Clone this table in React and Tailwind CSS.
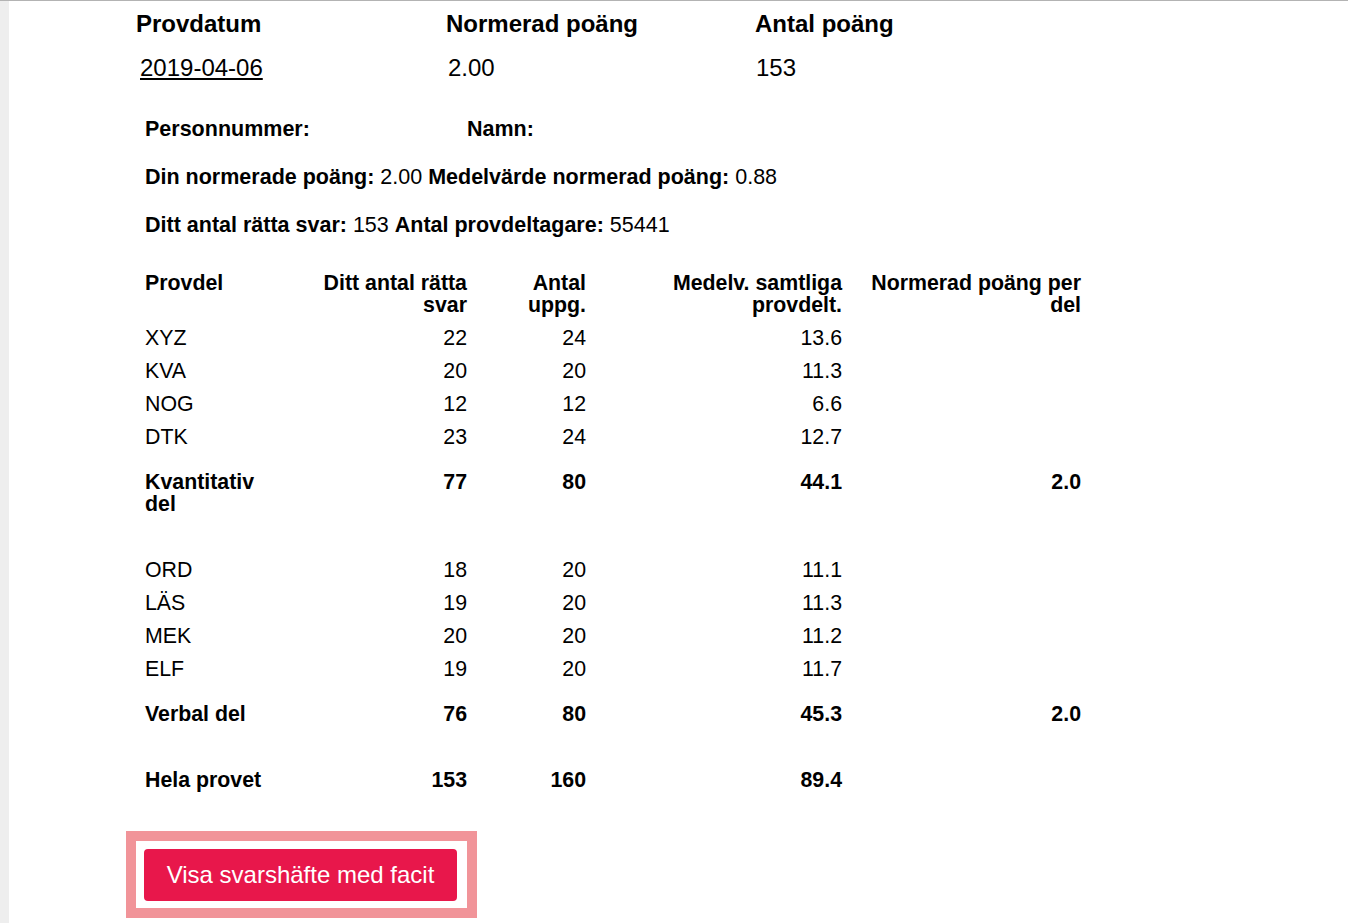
import React from "react"

const parts = [
    { name: "XYZ", right: 22, total: 24, avg: "13.6" },
    { name: "KVA", right: 20, total: 20, avg: "11.3" },
    { name: "NOG", right: 12, total: 12, avg: "6.6" },
    { name: "DTK", right: 23, total: 24, avg: "12.7" },
]

const verbal = [
    { name: "ORD", right: 18, total: 20, avg: "11.1" },
    { name: "LÄS", right: 19, total: 20, avg: "11.3" },
    { name: "MEK", right: 20, total: 20, avg: "11.2" },
    { name: "ELF", right: 19, total: 20, avg: "11.7" },
]

function PartRow({ row }) {
    return (
        <tr>
            <td className="py-[5.5px] text-left align-top">{row.name}</td>
            <td className="py-[5.5px] text-right align-top">{row.right}</td>
            <td className="py-[5.5px] text-right align-top">{row.total}</td>
            <td className="py-[5.5px] text-right align-top">{row.avg}</td>
            <td className="py-[5.5px] text-right align-top"></td>
        </tr>
    )
}

function SumRow({ label, right, total, avg, score, extraTop = true }) {
    const pad = extraTop ? "pt-[17.5px] pb-[5.5px]" : "py-[5.5px]"
    return (
        <tr className="font-bold">
            <td className={`${pad} text-left align-top`}>{label}</td>
            <td className={`${pad} text-right align-top`}>{right}</td>
            <td className={`${pad} text-right align-top`}>{total}</td>
            <td className={`${pad} text-right align-top`}>{avg}</td>
            <td className={`${pad} text-right align-top`}>{score}</td>
        </tr>
    )
}

export default function App() {
    return (
        <div className="min-h-screen flex bg-white text-black border-t border-[#b3b3b3] font-['Liberation_Sans',Arial,sans-serif]">
            {/* left strip */}
            <div className="w-[9px] shrink-0 bg-[#eeeeee]" />

            <div className="flex-1">
                {/* summary header */}
                <div className="ml-[127px] pt-[9px] grid grid-cols-[310px_309px_310px] text-[24px] leading-[28px]">
                    <div className="font-bold">Provdatum</div>
                    <div className="font-bold">Normerad poäng</div>
                    <div className="font-bold">Antal poäng</div>
                    <div className="pt-[16px] pl-[4px]">
                        <a href="#" className="underline">2019-04-06</a>
                    </div>
                    <div className="pt-[16px] pl-[2px]">2.00</div>
                    <div className="pt-[16px] pl-[1px]">153</div>
                </div>

                {/* person info */}
                <div className="ml-[136px] mt-[35px] flex flex-col gap-[24px] text-[21.5px] leading-[24px]">
                    <div className="flex font-bold">
                        <span className="w-[322px]">Personnummer:</span>
                        <span>Namn:</span>
                    </div>
                    <div>
                        <b>Din normerade poäng:</b> 2.00 <b>Medelvärde normerad poäng:</b> 0.88
                    </div>
                    <div>
                        <b>Ditt antal rätta svar:</b> 153 <b>Antal provdeltagare:</b> 55441
                    </div>
                </div>

                {/* results table */}
                <table className="ml-[136px] mt-[29.5px] table-fixed border-collapse w-[936px] text-[21.33px] leading-[22px]">
                    <colgroup>
                        <col className="w-[120px]" />
                        <col className="w-[202px]" />
                        <col className="w-[119px]" />
                        <col className="w-[256px]" />
                        <col className="w-[239px]" />
                    </colgroup>
                    <thead>
                        <tr className="font-bold">
                            <th className="py-[5.5px] text-left align-top font-bold">Provdel</th>
                            <th className="py-[5.5px] pl-[40px] text-right align-top font-bold">Ditt antal rätta svar</th>
                            <th className="py-[5.5px] pl-[20px] text-right align-top font-bold">Antal uppg.</th>
                            <th className="py-[5.5px] pl-[20px] text-right align-top font-bold">Medelv. samtliga provdelt.</th>
                            <th className="py-[5.5px] pl-[20px] text-right align-top font-bold">Normerad poäng per del</th>
                        </tr>
                    </thead>
                    <tbody>
                        {parts.map((row) => (
                            <PartRow key={row.name} row={row} />
                        ))}
                        <SumRow label="Kvantitativ del" right={77} total={80} avg="44.1" score="2.0" />
                        <tr><td colSpan={5} className="h-[33px]"></td></tr>
                        {verbal.map((row) => (
                            <PartRow key={row.name} row={row} />
                        ))}
                        <SumRow label="Verbal del" right={76} total={80} avg="45.3" score="2.0" />
                        <tr><td colSpan={5} className="h-[33px]"></td></tr>
                        <SumRow label="Hela provet" right={153} total={160} avg="89.4" score="" extraTop={false} />
                    </tbody>
                </table>

                {/* answer sheet button */}
                <div className="ml-[117px] mt-[34px] inline-block border-[10px] border-[#f19499] pt-[8px] pl-[8px] pr-[10px] pb-[7px]">
                    <button className="w-[313px] h-[52px] rounded-[4px] bg-[#e8174b] text-white text-[24px] leading-[28px]">
                        Visa svarshäfte med facit
                    </button>
                </div>
            </div>
        </div>
    )
}
